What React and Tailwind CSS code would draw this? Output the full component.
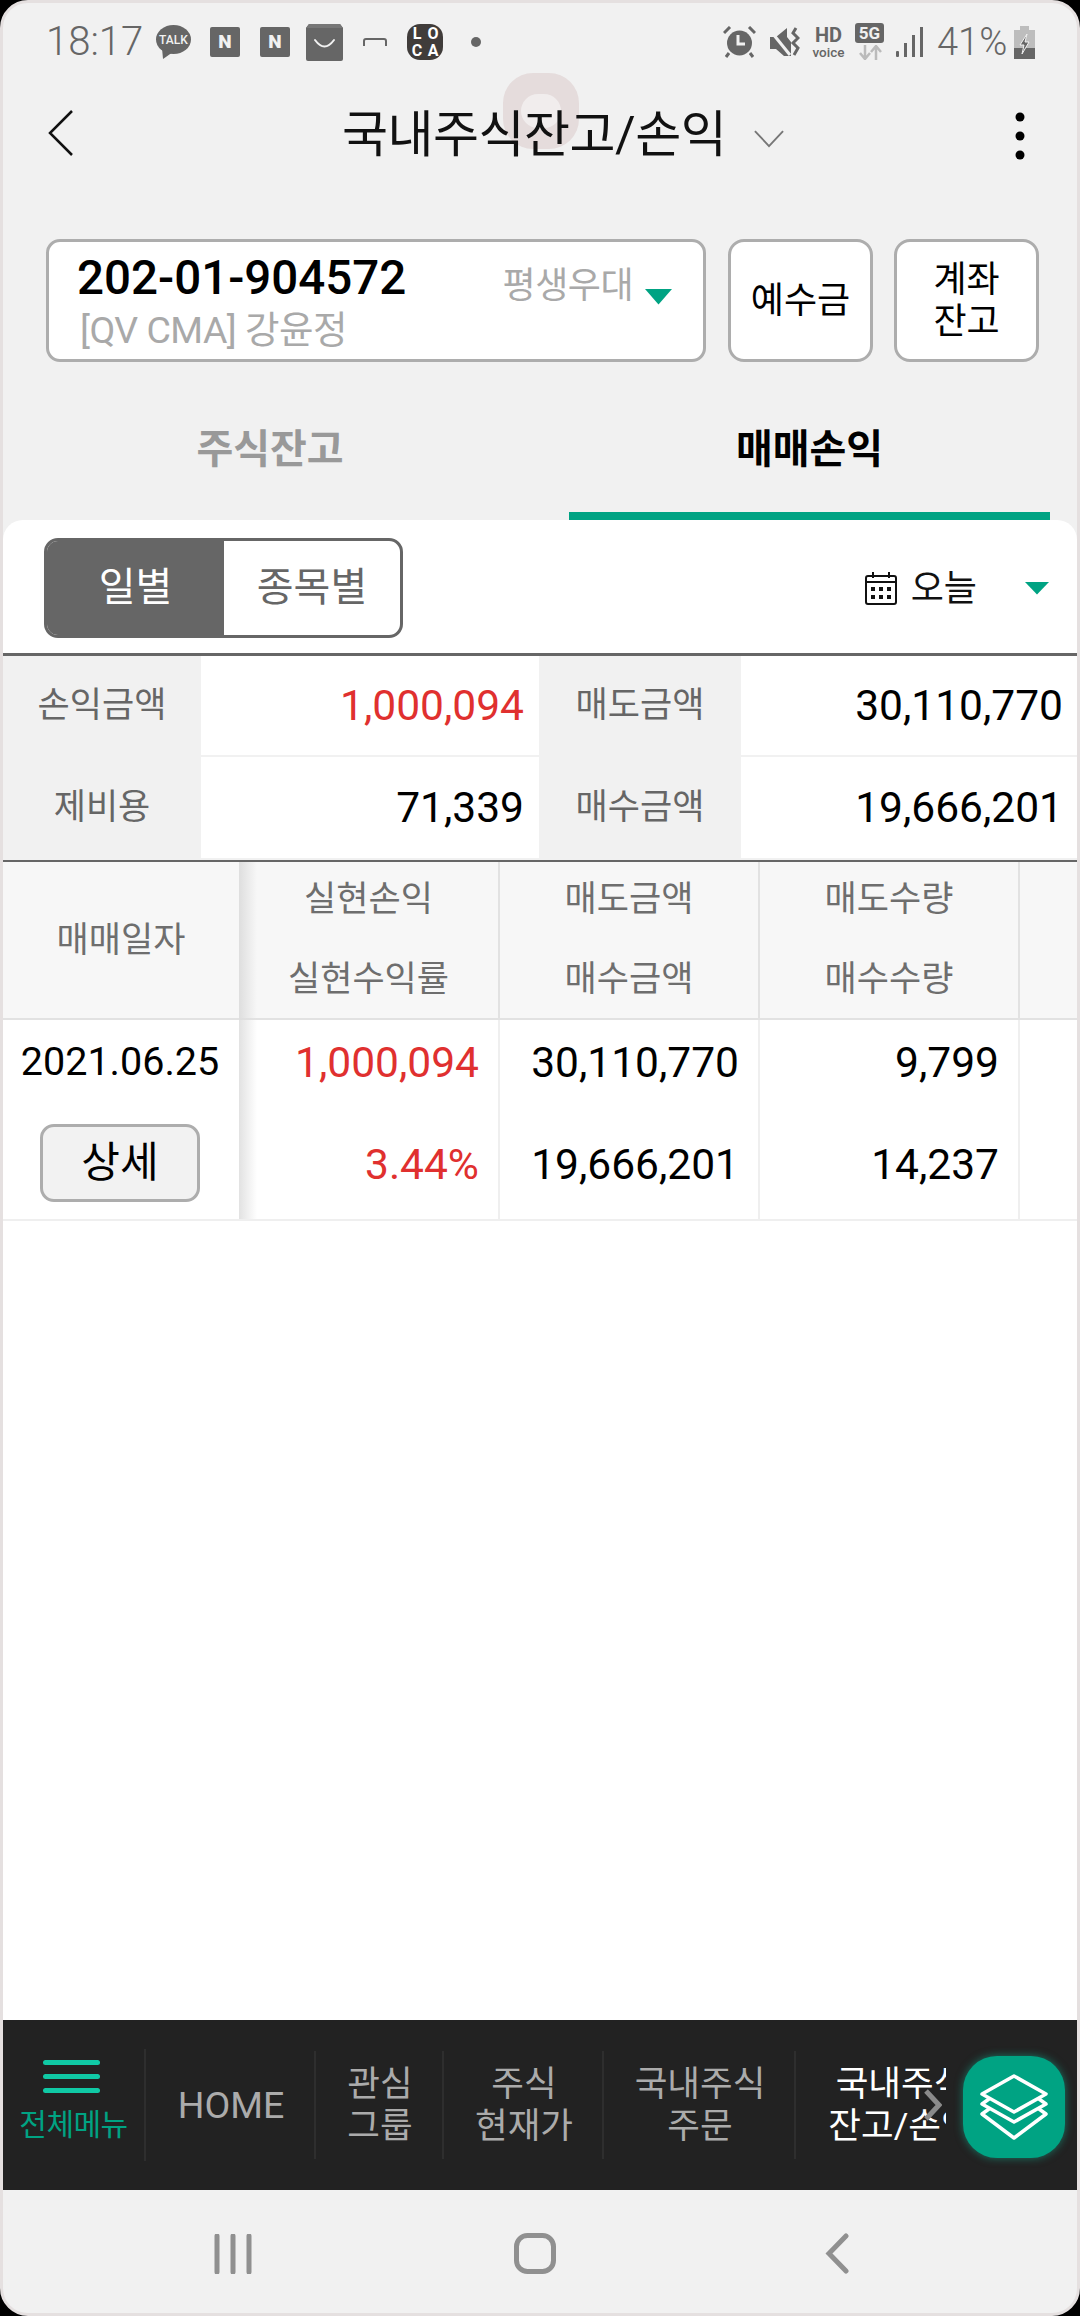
const GREEN = "#00a383";

function Caret({ w = 27, h = 16 }) {
  return (
    <svg width={w} height={h} viewBox="0 0 27 16" preserveAspectRatio="none" className="shrink-0">
      <path d="M0 0H27L13.5 15.5Z" fill={GREEN} />
    </svg>
  );
}

function StatusBar() {
  return (
    <div className="h-[78px] shrink-0 flex items-center pl-[43px] text-[#666]">
      <span className="text-[40px] font-light leading-none w-[110px]">18:17</span>
      <svg width="35" height="34" viewBox="0 0 35 34" className="shrink-0">
        <ellipse cx="17.5" cy="14.5" rx="17.5" ry="14.5" fill="#666" />
        <path d="M6 23L7 34L17 27Z" fill="#666" />
        <text x="17.5" y="19" textAnchor="middle" fontSize="12" fontWeight="500" fill="#f1f1f1">TALK</text>
      </svg>
      <NBox className="ml-[19px]" />
      <NBox className="ml-[20px]" />
      <svg width="37" height="37" viewBox="0 0 37 37" className="ml-[16px] shrink-0">
        <path d="M3 0H34L37 4V35Q37 37 35 37H2Q0 37 0 35V4Z" fill="#666" />
        <path d="M3 0H34L37 4H0Z" fill="#777" />
        <path d="M9 16Q18.5 29 28 16" stroke="#f1f1f1" strokeWidth="2" fill="none" strokeLinecap="round" />
      </svg>
      <svg width="24" height="10" viewBox="0 0 24 10" className="ml-[20px] shrink-0">
        <path d="M1 9V4Q1 2 3 2H21Q23 2 23 4V9" stroke="#666" strokeWidth="2" fill="none" />
      </svg>
      <div className="ml-[20px] w-[36px] h-[36px] rounded-[13px] bg-[#403c3a] shrink-0 grid grid-cols-2 text-white text-[16px] font-bold leading-[16px] text-center pt-[2px] px-[2px]">
        <span>L</span><span>O</span><span>C</span><span>A</span>
      </div>
      <div className="ml-[28px] w-[10px] h-[10px] rounded-full bg-[#666] shrink-0" />
      <div className="flex-1" />
      <svg width="33" height="32" viewBox="0 0 33 32" className="shrink-0">
        <circle cx="16.5" cy="17" r="12.5" fill="#666" />
        <path d="M15 9V18H22" stroke="#f1f1f1" strokeWidth="3" fill="none" />
        <path d="M1 7L7 1M32 7L26 1M6 27L3 31M27 27L30 31" stroke="#666" strokeWidth="3" />
      </svg>
      <svg width="31" height="32" viewBox="0 0 31 32" className="ml-[13px] shrink-0">
        <path d="M1 11H7L18 2V11L22 16V30L15 30L7 23H1Z" fill="#666" />
        <path d="M0 3L21 29" stroke="#f1f1f1" strokeWidth="3" />
        <path d="M27 2L24 7L29 12L24 17L29 22L25 29" stroke="#666" strokeWidth="3" fill="none" />
      </svg>
      <div className="ml-[11px] w-[35px] text-[#666] text-center leading-none shrink-0">
        <div className="text-[20px] font-bold leading-[20px]">HD</div>
        <div className="text-[13.5px] leading-[14px] font-medium">voice</div>
      </div>
      <div className="ml-[9px] w-[29px] shrink-0 flex flex-col items-center -mt-[2px]">
        <div className="w-[29px] h-[20px] rounded-[3px] bg-[#666] text-[#f1f1f1] text-[17px] font-bold leading-[20px] text-center">5G</div>
        <svg width="24" height="15" viewBox="0 0 24 15" className="mt-[2px]">
          <path d="M7 0V13M2 8L7 14L12 8" stroke="#bbb" strokeWidth="2.5" fill="none" />
          <path d="M18 15V2M13 7L18 1L23 7" stroke="#bbb" strokeWidth="2.5" fill="none" />
        </svg>
      </div>
      <svg width="27" height="30" viewBox="0 0 27 30" className="ml-[12px] shrink-0">
        <rect x="0" y="24" width="3" height="6" rx="1" fill="#666" />
        <rect x="8" y="16" width="3" height="14" fill="#666" />
        <rect x="16" y="8" width="3" height="22" fill="#666" />
        <rect x="24" y="0" width="3" height="30" fill="#666" />
      </svg>
      <span className="ml-[14px] text-[38px] leading-none w-[71px] font-light whitespace-nowrap">41%</span>
      <svg width="21" height="33" viewBox="0 0 21 33" className="ml-[6px] mr-[42px] shrink-0">
        <path d="M6 0H15V4H21V33H0V4H6Z" fill="#bdbdbd" />
        <path d="M0 22H21V33H0Z" fill="#666" />
        <path d="M13 8L6 19H10L8 28L15 16H11Z" fill="#666" stroke="#f1f1f1" strokeWidth="1" />
      </svg>
    </div>
  );
}

function NBox({ className }) {
  return (
    <div className={"w-[30px] h-[30px] rounded-[2px] bg-[#666] text-[#f1f1f1] text-[19px] font-black leading-[30px] text-center shrink-0 " + className}>
      N
    </div>
  );
}

function Header() {
  return (
    <div className="h-[104px] shrink-0 flex items-center relative">
      <svg width="26" height="48" viewBox="0 0 26 48" className="ml-[45px] shrink-0">
        <path d="M24 2L2 24L24 46" stroke="#111" strokeWidth="2.5" fill="none" />
      </svg>
      <span className="ml-[268px] mt-[3px] text-[50px] leading-none tracking-[-0.5px] text-[#111] whitespace-nowrap relative z-10">
        국내주식잔고/손익
      </span>
      <svg width="30" height="18" viewBox="0 0 32 19" className="ml-[28px] mt-[12px] shrink-0">
        <path d="M1 1L16 17L31 1" stroke="#777" strokeWidth="2" fill="none" />
      </svg>
      <svg width="10" height="48" viewBox="0 0 10 48" className="ml-auto mr-[52px] mt-[6px] shrink-0">
        <circle cx="5" cy="5" r="4.5" fill="#000" />
        <circle cx="5" cy="24" r="4.5" fill="#000" />
        <circle cx="5" cy="43" r="4.5" fill="#000" />
      </svg>
      {/* floating kakao chat head, faded behind the title */}
      <div className="absolute left-[500px] top-[-8px] w-[76px] h-[76px] rounded-[30px] bg-[#e5dcdc] flex items-center justify-center">
        <div className="w-[40px] h-[34px] rounded-full bg-[#f1eded]" />
      </div>
    </div>
  );
}

function AccountRow() {
  return (
    <div className="flex gap-[21px] pl-[43px] pt-[54px] shrink-0">
      <div className="w-[660px] h-[123px] rounded-[14px] border-[3px] border-[#adadad] bg-white flex pl-[28px]">
        <div className="flex-1">
          <div className="text-[47.5px] font-medium text-black leading-[46px] mt-[13px]">202-01-904572</div>
          <div className="text-[37.5px] text-[#a9a9a9] leading-[40px] ml-[3px] mt-[9px] tracking-[-0.5px] whitespace-nowrap">[QV CMA] 강윤정</div>
        </div>
        <div className="flex items-start pt-[22px] pr-[31px]">
          <span className="text-[36px] leading-[44px] text-[#a9a9a9] tracking-[-0.5px]">평생우대</span>
          <div className="mt-[25px] ml-[12px]"><Caret /></div>
        </div>
      </div>
      <button className="ml-[1px] w-[145px] h-[123px] rounded-[16px] border-[3px] border-[#adadad] bg-white text-[36px] text-black">
        예수금
      </button>
      <button className="w-[145px] h-[123px] rounded-[16px] border-[3px] border-[#adadad] bg-white text-[36px] leading-[42px] text-black">
        계좌<br />잔고
      </button>
    </div>
  );
}

function Tabs() {
  return (
    <div className="flex h-[158px] pl-[27px] shrink-0">
      <div className="w-[480px] flex items-end justify-center pb-[44px] text-[40px] font-bold text-[#999] leading-[52px]">주식잔고</div>
      <div className="ml-[59px] w-[481px] flex items-end justify-center pb-[36px] border-b-[8px] border-[#00a383] text-[40px] font-bold text-black leading-[52px]">매매손익</div>
    </div>
  );
}

function SummaryCell({ children, label, red, last }) {
  if (label) {
    return <div className="bg-[#f1f1f1] flex items-center justify-center text-[35px] text-[#666]">{children}</div>;
  }
  return (
    <div className={"flex items-center justify-end text-[42.5px] border-b-2 border-[#f1f1f1] " + (last ? "pr-[14px] " : "pr-[15px] ") + (red ? "text-[#e0302f]" : "text-black")}>
      {children}
    </div>
  );
}

function Summary() {
  return (
    <div className="grid grid-cols-[198px_338px_202px_1fr] grid-rows-[101px_103px] border-t-[3px] border-[#666] border-b-2 border-b-[#666]">
      <SummaryCell label>손익금액</SummaryCell>
      <SummaryCell red>1,000,094</SummaryCell>
      <SummaryCell label>매도금액</SummaryCell>
      <SummaryCell last>30,110,770</SummaryCell>
      <SummaryCell label>제비용</SummaryCell>
      <SummaryCell>71,339</SummaryCell>
      <SummaryCell label>매수금액</SummaryCell>
      <SummaryCell last>19,666,201</SummaryCell>
    </div>
  );
}

function HeadCol({ top, bottom, shadow }) {
  return (
    <div className={"flex flex-col items-center text-[35px] text-[#6e6e6e] border-r-2 border-[#e2e2e2] " + (shadow ? "bg-linear-to-r from-[#dedede] to-transparent bg-[length:18px_100%] bg-no-repeat" : "")}>
      <div className="h-[78px] leading-[76px]">{top}</div>
      <div className="h-[80px] leading-[80px]">{bottom}</div>
    </div>
  );
}

function BodyCol({ top, bottom, red, shadow, pr }) {
  return (
    <div className={"flex flex-col items-end text-[42.5px] border-r-2 border-[#efefef] " + pr + (red ? " text-[#e0302f] " : " text-black ") + (shadow ? "bg-linear-to-r from-[#e2e2e2] to-transparent bg-[length:18px_100%] bg-no-repeat" : "")}>
      <div className="h-[100px] leading-[86px]">{top}</div>
      <div className="h-[98px] leading-[90px]">{bottom}</div>
    </div>
  );
}

function Table() {
  return (
    <>
      <div className="grid grid-cols-[236px_261px_260px_260px_1fr] h-[158px] bg-[#f7f7f7] border-b-2 border-[#e2e2e2]">
        <div className="flex items-center justify-center text-[35px] text-[#6e6e6e]">매매일자</div>
        <HeadCol top="실현손익" bottom="실현수익률" shadow />
        <HeadCol top="매도금액" bottom="매수금액" />
        <HeadCol top="매도수량" bottom="매수수량" />
        <div />
      </div>
      <div className="grid grid-cols-[236px_261px_260px_260px_1fr] h-[201px] border-b-2 border-[#efefef]">
        <div className="flex flex-col items-center pr-[2px]">
          <div className="h-[104px] leading-[84px] text-[39.5px] text-black">2021.06.25</div>
          <button className="w-[160px] h-[78px] rounded-[14px] border-[3px] border-[#adadad] bg-[#f2f2f2] text-[42px] leading-[64px] text-black">상세</button>
        </div>
        <BodyCol top="1,000,094" bottom="3.44%" red shadow pr="pr-[19px]" />
        <BodyCol top="30,110,770" bottom="19,666,201" pr="pr-[19px]" />
        <BodyCol top="9,799" bottom="14,237" pr="pr-[19px]" />
        <div />
      </div>
    </>
  );
}

function NavItem({ children, w, active, last }) {
  return (
    <div className={"shrink-0 h-[108px] flex items-center justify-center text-center text-[35.5px] leading-[42px] pl-[2px] " + w + (last ? "" : " border-r-2 border-[#2e2e2e]") + (active ? " text-white" : " text-[#ababab]")}>
      <div className="whitespace-nowrap">{children}</div>
    </div>
  );
}

function BottomMenu() {
  return (
    <div className="h-[170px] shrink-0 bg-[#222] relative flex items-center">
      <div className="w-[943px] flex items-center overflow-hidden">
        <div className="w-[143px] shrink-0 h-[112px] border-r-2 border-[#2e2e2e] flex flex-col items-center">
          <div className="w-[57px] -ml-[5px] flex flex-col gap-[9px] mt-[11px]">
            <div className="h-[5px] rounded-full bg-[#10c9a5]" />
            <div className="h-[5px] rounded-full bg-[#10c9a5]" />
            <div className="h-[5px] rounded-full bg-[#10c9a5]" />
          </div>
          <div className="text-[30px] text-[#00a383] leading-[34px] mt-[15px] tracking-[-0.5px] whitespace-nowrap">전체메뉴</div>
        </div>
        <NavItem w="w-[170px] text-[37.5px]">HOME</NavItem>
        <NavItem w="w-[128px]">관심<br />그룹</NavItem>
        <NavItem w="w-[160px]">주식<br />현재가</NavItem>
        <NavItem w="w-[192px]">국내주식<br />주문</NavItem>
        <NavItem w="w-[208px]" active last>국내주식<br />잔고/손익</NavItem>
      </div>
      {/* scroll hint over the clipped last item */}
      <svg width="18" height="32" viewBox="0 0 18 32" className="absolute left-[921px] top-[69px]">
        <path d="M2 2L15 16L2 30" stroke="#8a8a8a" strokeWidth="5" fill="none" />
      </svg>
      <div className="absolute left-[960px] top-[36px] w-[102px] h-[102px] rounded-[34px] bg-[#00a383] shadow-[0_0_8px_rgba(16,201,165,0.5)] flex items-center justify-center">
        <svg width="68" height="68" viewBox="0 0 68 68" fill="none" stroke="white" strokeWidth="3.5" strokeLinejoin="round">
          <path d="M34 3L66 21L34 39L2 21Z" />
          <path d="M9 26L2 31L34 49L66 31L59 26" />
          <path d="M9 36L2 41L34 65L66 41L59 36" />
        </svg>
      </div>
    </div>
  );
}

function NavBar() {
  return (
    <div className="flex-1 flex items-center justify-center relative pt-[4px]">
      <svg width="38" height="40" viewBox="0 0 38 40" className="absolute left-[211px]">
        <path d="M3 2V38M19 2V38M35 2V38" stroke="#909090" strokeWidth="5" strokeLinecap="round" />
      </svg>
      <svg width="42" height="41" viewBox="0 0 42 41" className="absolute left-[511px]">
        <rect x="2.5" y="2.5" width="37" height="36" rx="11" stroke="#909090" strokeWidth="5" fill="none" />
      </svg>
      <svg width="24" height="41" viewBox="0 0 24 41" className="absolute left-[822px]">
        <path d="M21 3L4 20.5L21 38" stroke="#909090" strokeWidth="5" strokeLinecap="round" fill="none" />
      </svg>
    </div>
  );
}

export default function App() {
  return (
    <div className="w-[1080px] h-[2316px] bg-black font-['Roboto','Noto_Sans_CJK_KR',sans-serif]">
      <div className="w-full h-full bg-[#f1f1f1] rounded-[28px] border-[3px] border-[#e5e0e0] overflow-hidden flex flex-col">
        <StatusBar />
        <Header />
        <AccountRow />
        <Tabs />
        <div className="h-[1500px] shrink-0 bg-white rounded-t-[20px] flex flex-col">
          <div className="h-[133px] shrink-0 flex items-start justify-between pt-[18px] pl-[41px] pr-[28px]">
            <div className="w-[359px] h-[100px] rounded-[14px] border-[3px] border-[#666] flex overflow-hidden">
              <div className="w-[177px] -my-[1px] bg-[#666] text-white text-[40px] flex items-center justify-center">일별</div>
              <div className="flex-1 text-[#666] text-[40px] flex items-center justify-center">종목별</div>
            </div>
            <div className="flex items-center h-[100px] pt-[1px]">
              <svg width="32" height="33" viewBox="0 0 32 33" fill="none" className="shrink-0">
                <rect x="1" y="4" width="30" height="28" rx="2" stroke="#111" strokeWidth="2" />
                <path d="M1 10H31M8 0V6M24 0V6" stroke="#111" strokeWidth="2" />
                <path d="M6 15H10V19H6ZM14 15H18V19H14ZM22 15H26V19H22ZM6 23H10V27H6ZM14 23H18V27H14ZM22 23H26V27H22Z" fill="#111" />
              </svg>
              <span className="ml-[14px] text-[36px] text-[#111] leading-none">오늘</span>
              <div className="ml-[48px]"><Caret w={24} h={13} /></div>
            </div>
          </div>
          <Summary />
          <Table />
          <div className="flex-1" />
        </div>
        <BottomMenu />
        <NavBar />
      </div>
    </div>
  );
}
